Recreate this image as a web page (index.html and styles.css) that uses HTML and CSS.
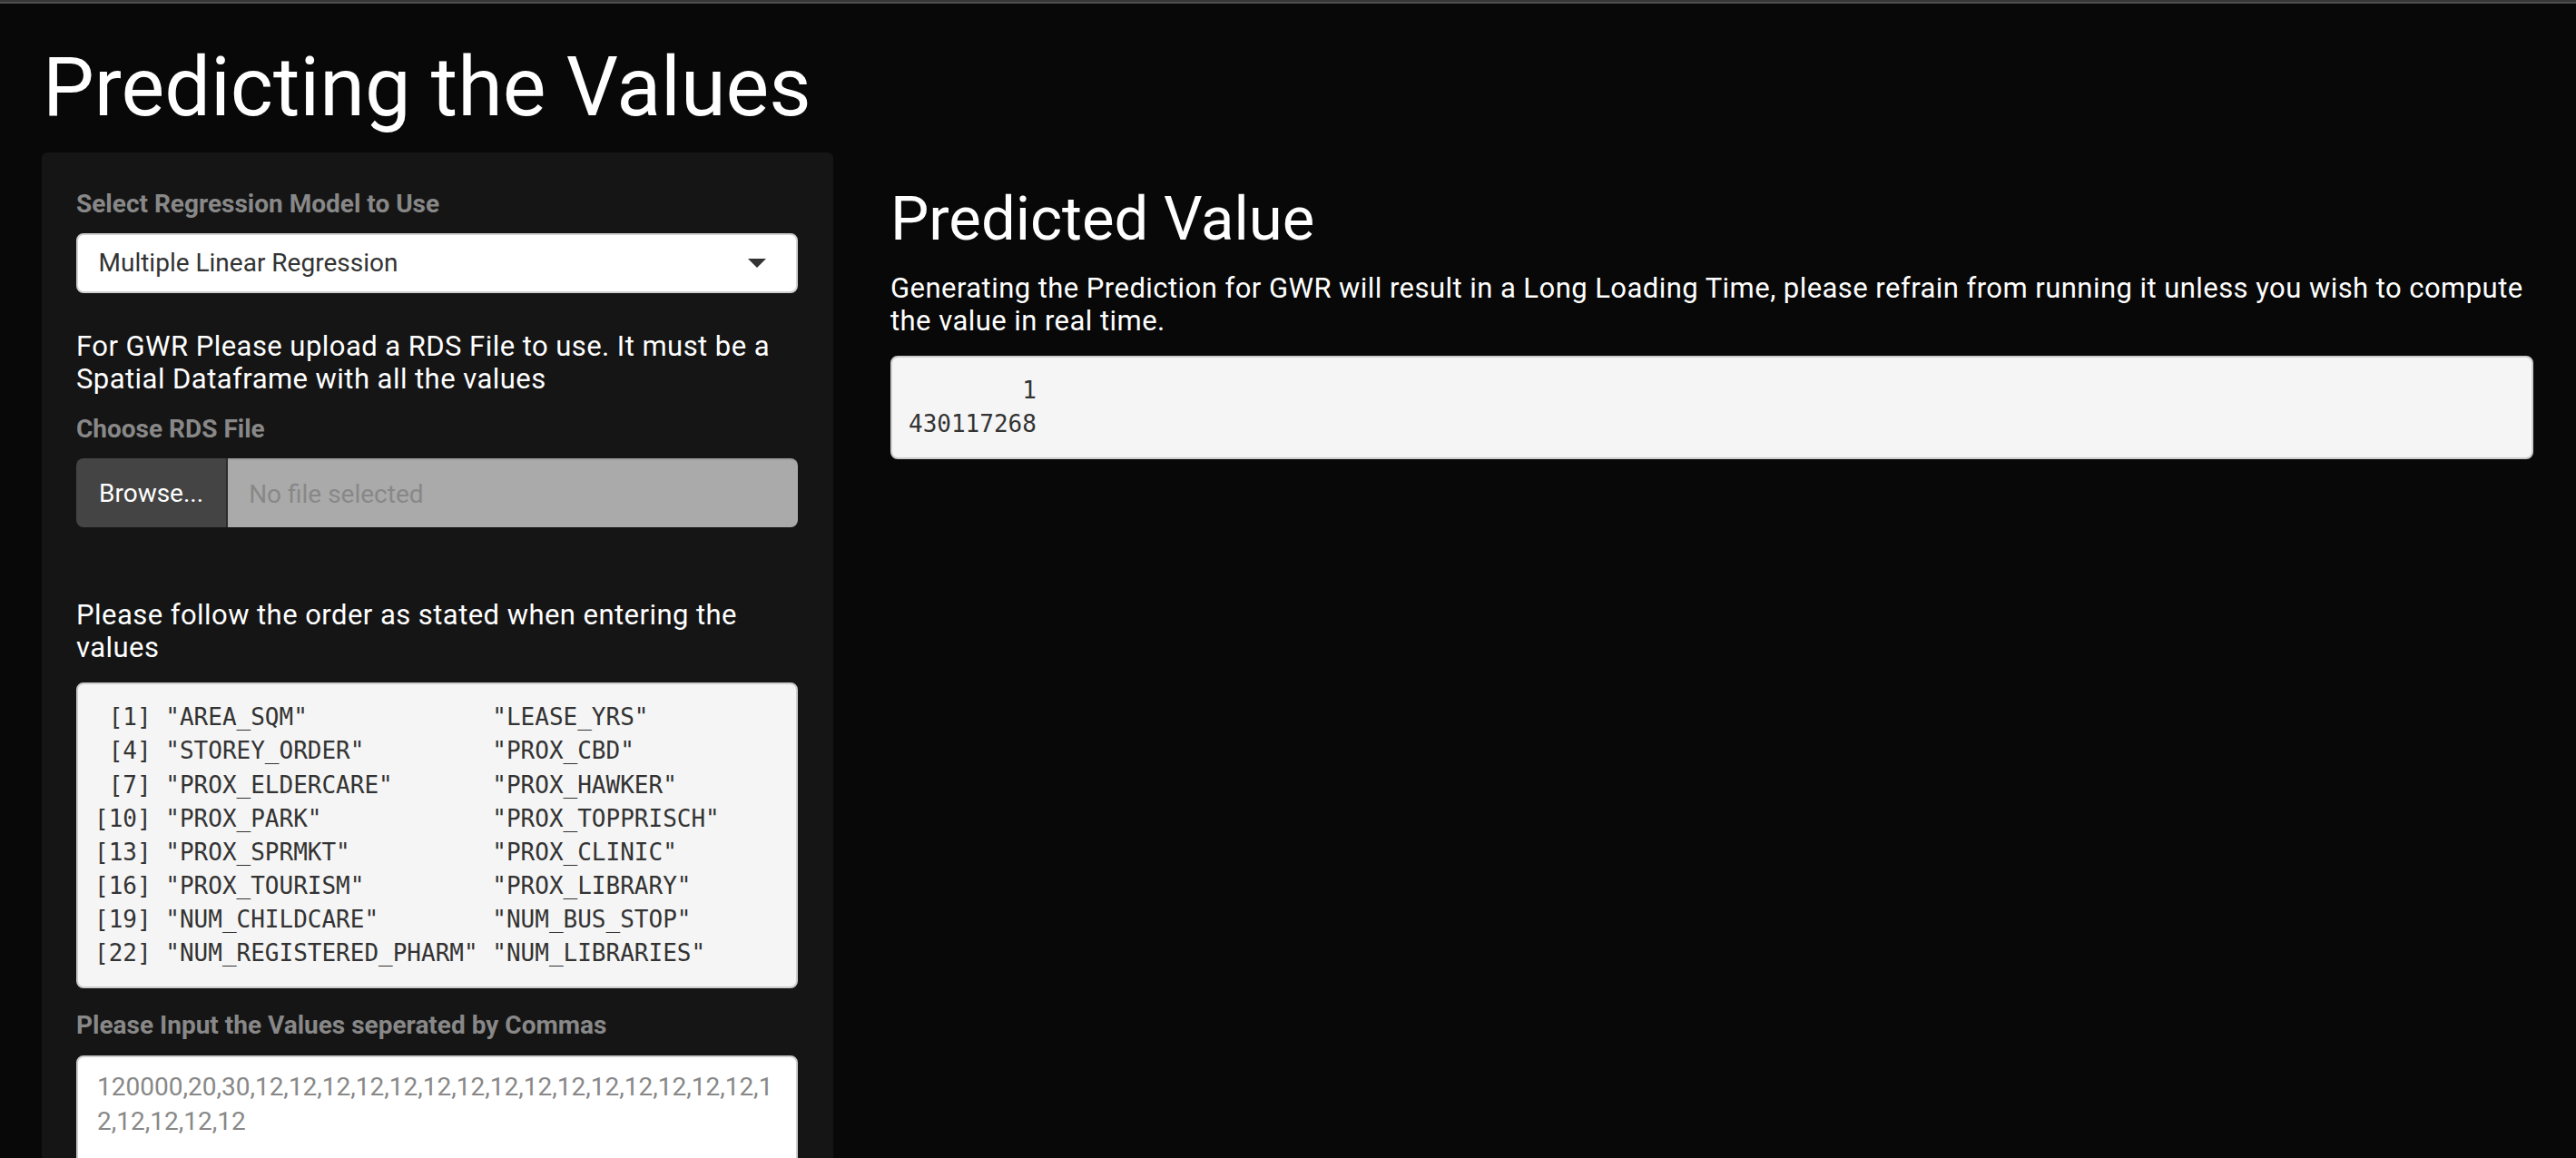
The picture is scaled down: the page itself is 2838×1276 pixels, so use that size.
FILE: index.html
```html
<!DOCTYPE html>
<html lang="en">
<head>
<meta charset="utf-8">
<title>Predicting the Values</title>
<link rel="stylesheet" href="styles.css">
</head>
<body>
<div class="topbar"></div>
<div class="page">
  <h1 class="title">Predicting the Values</h1>
  <div class="layout">
    <aside class="sidebar">
      <label class="field-label" for="model">Select Regression Model to Use</label>
      <div class="select-wrap">
        <select id="model" class="select">
          <option>Multiple Linear Regression</option>
        </select>
        <svg class="caret" width="20" height="10" viewBox="0 0 20 10" aria-hidden="true"><path d="M0 0H20L10 10Z" fill="#333"/></svg>
      </div>
      <p class="note note-gwr">For GWR Please upload a RDS File to use. It must be a Spatial Dataframe with all the values</p>
      <label class="field-label label-file" for="rds">Choose RDS File</label>
      <div class="file-group">
        <span class="browse">Browse...</span>
        <input id="rds" class="file-name" type="text" readonly placeholder="No file selected">
      </div>
      <p class="note note-order">Please follow the order as stated when entering the values</p>
<pre class="output output-vars">
 [1] "AREA_SQM"             "LEASE_YRS"
 [4] "STOREY_ORDER"         "PROX_CBD"
 [7] "PROX_ELDERCARE"       "PROX_HAWKER"
[10] "PROX_PARK"            "PROX_TOPPRISCH"
[13] "PROX_SPRMKT"          "PROX_CLINIC"
[16] "PROX_TOURISM"         "PROX_LIBRARY"
[19] "NUM_CHILDCARE"        "NUM_BUS_STOP"
[22] "NUM_REGISTERED_PHARM" "NUM_LIBRARIES"</pre>
      <label class="field-label label-values" for="vals">Please Input the Values seperated by Commas</label>
      <textarea id="vals" class="values" placeholder="120000,20,30,12,12,12,12,12,12,12,12,12,12,12,12,12,12,12,12,12,12,12,12"></textarea>
    </aside>
    <main class="main">
      <h2 class="sub">Predicted Value</h2>
      <p class="note note-main">Generating the Prediction for GWR will result in a Long Loading Time, please refrain from running it unless you wish to compute the value in real time.</p>
<pre class="output output-result">
        1
430117268</pre>
    </main>
  </div>
</div>
</body>
</html>
```

FILE: styles.css
```css
html, body {
  margin: 0;
  padding: 0;
}

body {
  background: #080808;
  color: #ffffff;
  font-family: Roboto, "Liberation Sans", Arial, sans-serif;
  font-size: 28px;
  overflow: hidden;
}

.topbar {
  height: 2px;
  background: #363636;
  border-bottom: 2px solid #4e4e4e;
}

.page {
  padding: 0 47px 0 46px;
}

.title {
  font-size: 90px;
  font-weight: 400;
  line-height: 99px;
  margin: 42.7px 0 22.3px 1px;
  color: #ffffff;
}

.layout {
  display: grid;
  grid-template-columns: 872px 1fr;
  column-gap: 63px;
  align-items: start;
}

.sidebar {
  background: #151515;
  border-radius: 6px;
  padding: 36.7px 39px 40px 38px;
  display: flex;
  flex-direction: column;
}

.field-label {
  display: block;
  font-size: 28px;
  font-weight: 700;
  line-height: 40px;
  color: #888888;
  margin-bottom: 12px;
}

.select-wrap {
  position: relative;
  height: 66px;
}

.select {
  appearance: none;
  -webkit-appearance: none;
  box-sizing: border-box;
  width: 100%;
  height: 66px;
  margin: 0;
  padding: 0 60px 0 22.5px;
  background: #ffffff;
  border: 2px solid #d0d0d0;
  border-radius: 8px;
  font-family: Roboto, "Liberation Sans", Arial, sans-serif;
  font-size: 28px;
  color: #333333;
  outline: none;
}

.caret {
  position: absolute;
  right: 35px;
  top: 28px;
  pointer-events: none;
}

.note {
  font-size: 31px;
  line-height: 36px;
  letter-spacing: 0.45px;
  margin: 0;
  color: #ffffff;
}

.note-gwr {
  margin-top: 41.6px;
}

.label-file {
  margin-top: 16.8px;
}

.file-group {
  display: flex;
  height: 76px;
}

.browse {
  display: flex;
  align-items: center;
  padding: 0 25px;
  background: #444444;
  color: #ffffff;
  font-size: 28px;
  border-radius: 8px 0 0 8px;
  border-right: 2px solid #2c2c2c;
}

.file-name {
  flex: 1;
  min-width: 0;
  box-sizing: border-box;
  height: 76px;
  margin: 0;
  padding: 0 0 0 23px;
  background: #aaaaaa;
  border: 0;
  border-top: 2px solid #9c9c9c;
  border-radius: 0 8px 8px 0;
  font-family: Roboto, "Liberation Sans", Arial, sans-serif;
  font-size: 28px;
  color: #333333;
  outline: none;
}

.file-name::placeholder {
  color: #888888;
  opacity: 1;
}

.note-order {
  margin-top: 79.2px;
}

.output {
  margin: 0;
  background: #f5f5f5;
  color: #333333;
  border: 2px solid #cccccc;
  border-radius: 8px;
  padding: 18px;
  font-family: "DejaVu Sans Mono", "Liberation Mono", monospace;
  font-size: 26px;
  line-height: 37.14px;
  white-space: pre;
  overflow: hidden;
}

.output-vars {
  margin-top: 20.1px;
}

.label-values {
  margin-top: 20.6px;
  margin-bottom: 12.6px;
}

.values {
  display: block;
  box-sizing: border-box;
  width: 100%;
  height: 210px;
  margin: 0;
  padding: 14px 18px 14px 21px;
  background: #ffffff;
  border: 2px solid #cccccc;
  border-radius: 8px;
  font-family: Roboto, "Liberation Sans", Arial, sans-serif;
  font-size: 28px;
  line-height: 38.7px;
  color: #333333;
  resize: none;
  overflow: hidden;
  outline: none;
}

.values::placeholder {
  color: #888888;
  opacity: 1;
}

.main {
  padding-top: 37px;
}

.sub {
  font-size: 67px;
  font-weight: 400;
  line-height: 73.7px;
  margin: 0;
  color: #ffffff;
}

.note-main {
  margin-top: 21px;
  line-height: 36.7px;
}

.output-result {
  margin-top: 18.6px;
}
```
